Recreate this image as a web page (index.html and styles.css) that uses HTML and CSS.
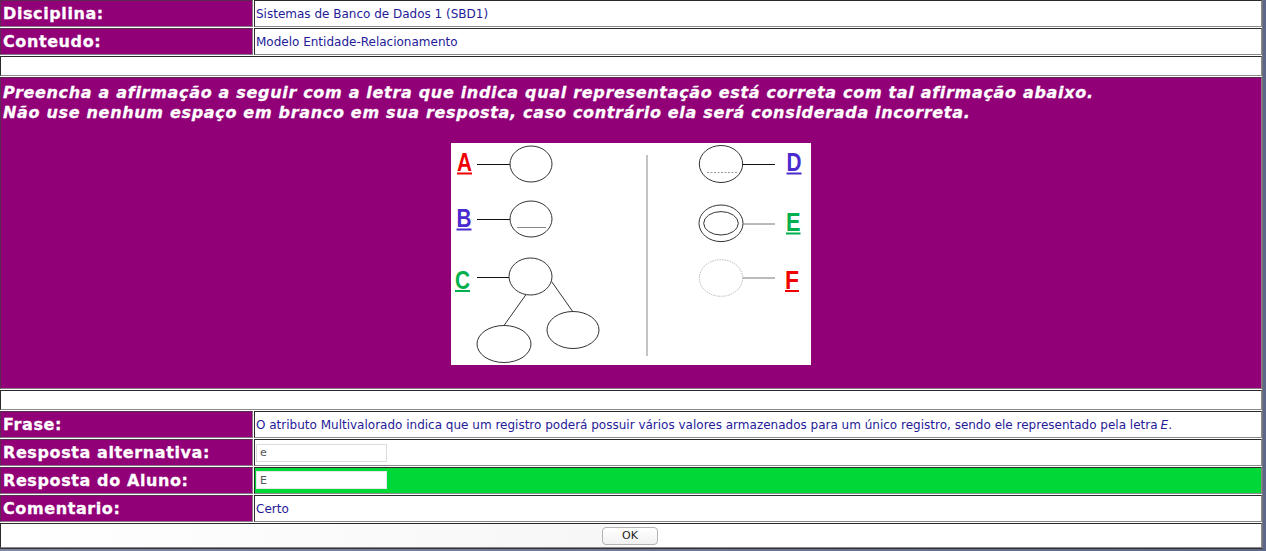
FILE: index.html
```html
<!DOCTYPE html>
<html lang="pt">
<head>
<meta charset="utf-8">
<title>Resposta</title>
<link rel="stylesheet" href="styles.css">
</head>
<body>
<div class="page">
  <div class="row">
    <div class="cell label">Disciplina:</div>
    <div class="cell value">Sistemas de Banco de Dados 1 (SBD1)</div>
  </div>
  <div class="row">
    <div class="cell label">Conteudo:</div>
    <div class="cell value">Modelo Entidade-Relacionamento</div>
  </div>
  <div class="row">
    <div class="cell blank"></div>
  </div>
  <div class="row">
    <div class="cell question">
      <p class="q-text">Preencha a afirmação a seguir com a letra que indica qual representação está correta com tal afirmação abaixo.<br>Não use nenhum espaço em branco em sua resposta, caso contrário ela será considerada incorreta.</p>
      <div class="figure">
        <svg width="360" height="222" viewBox="0 0 360 222" xmlns="http://www.w3.org/2000/svg">
          <rect x="0" y="0" width="360" height="222" fill="#fff"/>
          <g font-family="Liberation Sans, Arial, sans-serif" font-weight="bold" font-size="25">
            <text x="6" y="28" fill="#f00000" textLength="15" lengthAdjust="spacingAndGlyphs">A</text>
            <rect x="6" y="29.5" width="15" height="2" fill="#f00000"/>
            <text x="5.5" y="84" fill="#4a2bcf" textLength="15" lengthAdjust="spacingAndGlyphs">B</text>
            <rect x="5.5" y="85.5" width="15" height="2" fill="#4a2bcf"/>
            <text x="4" y="145.5" fill="#00b04c" textLength="15" lengthAdjust="spacingAndGlyphs">C</text>
            <rect x="4" y="147" width="15" height="2" fill="#00b04c"/>
            <text x="335.5" y="28" fill="#4a2bcf" textLength="15" lengthAdjust="spacingAndGlyphs">D</text>
            <rect x="335.5" y="29.5" width="15" height="2" fill="#4a2bcf"/>
            <text x="335" y="88" fill="#00b04c" textLength="14.5" lengthAdjust="spacingAndGlyphs">E</text>
            <rect x="335" y="89.5" width="14.5" height="2" fill="#00b04c"/>
            <text x="334" y="145.5" fill="#f00000" textLength="14" lengthAdjust="spacingAndGlyphs">F</text>
            <rect x="334" y="147" width="14" height="2" fill="#f00000"/>
          </g>
          <g fill="none" stroke="#333" stroke-width="1">
            <line x1="26" y1="21.5" x2="59" y2="21.5" stroke="#111"/>
            <ellipse cx="80" cy="21" rx="21" ry="18"/>
            <line x1="26" y1="76.5" x2="59" y2="76.5" stroke="#111"/>
            <ellipse cx="80" cy="76" rx="21" ry="18"/>
            <line x1="66" y1="84.5" x2="95" y2="84.5" stroke="#888"/>
            <line x1="26" y1="134.5" x2="58" y2="134.5" stroke="#111"/>
            <ellipse cx="79.5" cy="133.5" rx="21.5" ry="18.5"/>
            <line x1="74.7" y1="152" x2="53" y2="182.5"/>
            <line x1="100.7" y1="138.7" x2="121.7" y2="168.5"/>
            <ellipse cx="53" cy="201" rx="27" ry="18.5"/>
            <ellipse cx="122" cy="187" rx="26" ry="18.5"/>
            <ellipse cx="270" cy="21" rx="21.7" ry="18.5"/>
            <line x1="291.7" y1="21.5" x2="324" y2="21.5" stroke="#111"/>
            <line x1="256" y1="29.5" x2="286" y2="29.5" stroke="#999" stroke-dasharray="2 1.5"/>
            <ellipse cx="270" cy="80.3" rx="22" ry="18.3"/>
            <ellipse cx="270" cy="80.3" rx="17.3" ry="11.7"/>
            <line x1="292" y1="81" x2="324" y2="81" stroke="#777"/>
            <ellipse cx="270" cy="135" rx="21.7" ry="18.3" stroke="#b8b8b8" stroke-dasharray="1.5 1"/>
            <line x1="291.7" y1="135" x2="324" y2="135" stroke="#777"/>
            <line x1="196" y1="12" x2="196" y2="213" stroke="#c4c4c4" stroke-width="2"/>
          </g>
        </svg>
      </div>
    </div>
  </div>
  <div class="row">
    <div class="cell blank"></div>
  </div>
  <div class="row">
    <div class="cell label">Frase:</div>
    <div class="cell value">O atributo Multivalorado indica que um registro poderá possuir vários valores armazenados para um único registro, sendo ele representado pela letra <i>E</i>.</div>
  </div>
  <div class="row">
    <div class="cell label">Resposta alternativa:</div>
    <div class="cell value"><span class="field field-alt">e</span></div>
  </div>
  <div class="row">
    <div class="cell label">Resposta do Aluno:</div>
    <div class="cell value correct"><span class="field field-student">E</span></div>
  </div>
  <div class="row">
    <div class="cell label">Comentario:</div>
    <div class="cell value">Certo</div>
  </div>
  <div class="row">
    <div class="cell footer"><button class="ok" type="button">OK</button></div>
  </div>
</div>
</body>
</html>
```

FILE: styles.css
```css
html, body {
  margin: 0;
  padding: 0;
}

body {
  background: linear-gradient(90deg, #8088a8, #5d6789);
  width: 1266px;
  height: 551px;
  overflow: hidden;
}

.page {
  width: 1262px;
  height: 548px;
  background: #fff;
  border-right: 1px solid #777;
  border-bottom: 1px solid #333;
}

.row {
  display: flex;
  gap: 1px;
  margin-bottom: 1px;
}

.cell {
  box-sizing: border-box;
  border: 1px solid;
  border-color: #2a2a2a #8a8a8a #8a8a8a #2a2a2a;
  height: 27px;
}

.label {
  flex: 0 0 253px;
  background: #920078;
  border-color: #5a2a52 #8a7a88 #8a7a88 #5a2a52;
  color: #fff;
  font-family: "DejaVu Sans", Verdana, sans-serif;
  font-weight: bold;
  font-size: 16px;
  letter-spacing: 0.6px;
  -webkit-text-stroke: 0.3px #fff;
  padding-left: 2px;
  display: flex;
  align-items: center;
}

.value {
  flex: 0 0 1008px;
  background: #fff;
  color: #251a98;
  font-family: "DejaVu Sans", Verdana, sans-serif;
  font-size: 12px;
  padding-left: 1px;
  display: flex;
  align-items: center;
  white-space: nowrap;
}

.value i {
  margin-left: 3px;
}

.correct {
  background: #00d838;
}

.blank {
  flex: 0 0 1262px;
  height: 20px;
  background: #fff;
}

.question {
  flex: 0 0 1262px;
  height: 312px;
  background: #920078;
  border-color: #5a2a52 #8a7a88 #8a7a88 #5a2a52;
  padding: 5px 0 0 2px;
}

.q-text {
  margin: 0;
  color: #fff;
  font-family: "DejaVu Sans", Verdana, sans-serif;
  font-weight: bold;
  font-style: italic;
  font-size: 16px;
  letter-spacing: 0.68px;
  -webkit-text-stroke: 0.3px #fff;
  line-height: 20px;
}

.figure {
  display: flex;
  justify-content: center;
  margin-top: 20px;
  padding-right: 2px;
}

.figure svg {
  display: block;
}

.field {
  box-sizing: border-box;
  display: flex;
  align-items: center;
  width: 131px;
  height: 18px;
  background: #fff;
  padding-left: 3px;
  font-family: "DejaVu Sans", Verdana, sans-serif;
  font-size: 11px;
  color: #555;
}

.field-alt {
  border: 1px solid #dcdcdc;
}

.field-student {
  border: 1px solid #e8e8e8;
  margin-top: -1px;
}

.footer {
  flex: 0 0 1262px;
  height: 25px;
  background: linear-gradient(90deg, #fff 0%, #f7f7f7 48%, #fff 52%, #fff 100%);
  display: flex;
  justify-content: center;
  align-items: center;
  padding-right: 2px;
}

.ok {
  box-sizing: border-box;
  width: 56px;
  height: 18px;
  padding: 0;
  border: 1px solid #b4b4b4;
  border-radius: 4px;
  background: linear-gradient(#ffffff, #f1f1f1);
  font-family: "DejaVu Sans", Verdana, sans-serif;
  font-size: 11px;
  color: #222;
}
```
